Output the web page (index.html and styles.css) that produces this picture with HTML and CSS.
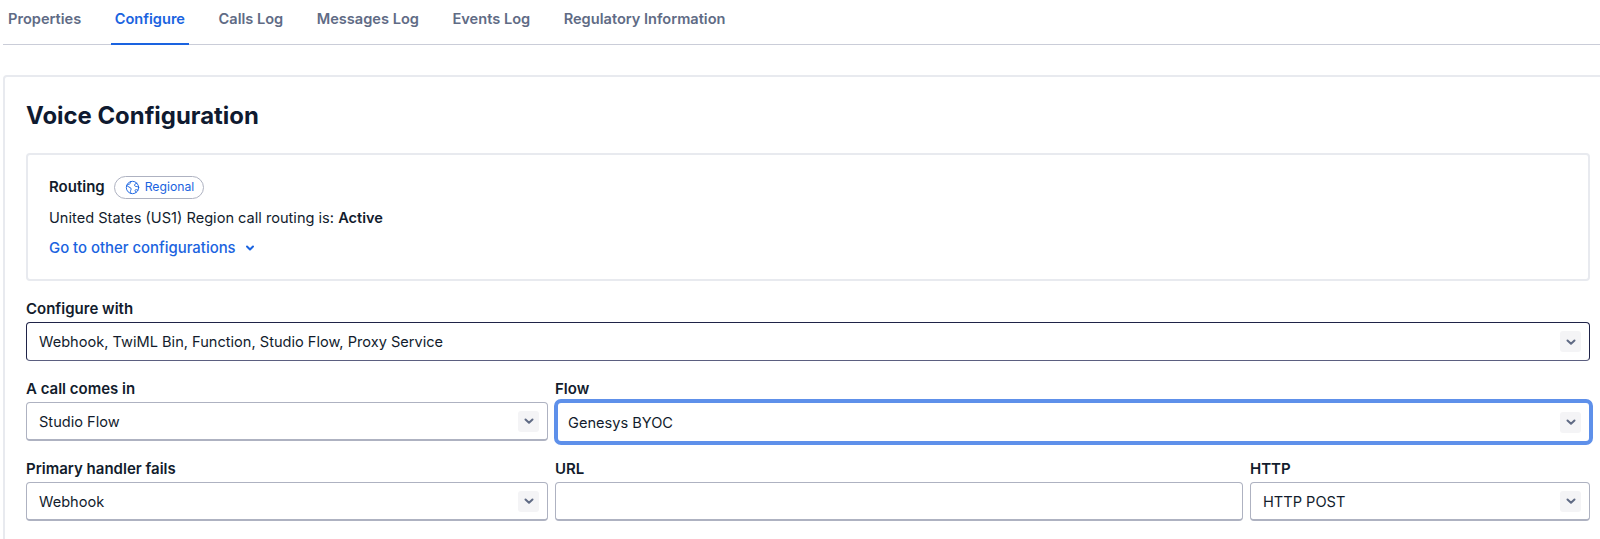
FILE: index.html
```html
<!DOCTYPE html>
<html lang="en">
<head>
<meta charset="utf-8">
<title>Voice Configuration</title>
<link rel="stylesheet" href="styles.css">
</head>
<body>
<nav class="tabs">
  <a class="tab">Properties</a>
  <a class="tab active">Configure</a>
  <a class="tab">Calls Log</a>
  <a class="tab">Messages Log</a>
  <a class="tab">Events Log</a>
  <a class="tab">Regulatory Information</a>
</nav>
<main class="card">
  <h1 class="title">Voice Configuration</h1>
  <section class="routing">
    <div class="routing-head">
      <strong class="routing-label">Routing</strong>
      <span class="badge">
        <svg class="globe" viewBox="0 0 16 16" width="15" height="15" fill="none" stroke="currentColor" stroke-width="1" stroke-linecap="round" stroke-linejoin="round"><circle cx="8" cy="8" r="6.6"/><path d="M6 1.8C6.2 3.4 5.4 4.4 4 4.6 3 4.8 2.2 5.2 1.9 6 3 7.4 5.4 7.4 6.4 8.8 7 10 5.8 11 5.8 12.2 5.8 13.2 6.2 14 6.6 14.4"/><path d="M12.6 3.4C11 3.8 9.8 4.8 10.2 6 10.6 7 12.8 6.8 14.4 7.4"/><path d="M11.8 13.2C11 12.2 10.4 11.4 10.9 10.6 11.4 10 12.6 10.2 13.8 10.8"/></svg>
        Regional
      </span>
    </div>
    <p class="routing-status">United States (US1) Region call routing is: <strong>Active</strong></p>
    <a class="routing-link">Go to other configurations
      <svg class="link-chevron" viewBox="0 0 10 10" width="10" height="10" fill="none" stroke="currentColor" stroke-width="2" stroke-linecap="round" stroke-linejoin="round"><path d="M2 3.5 5 6.5 8 3.5"/></svg>
    </a>
  </section>

  <div class="field">
    <label class="label">Configure with</label>
    <div class="select dark"><span>Webhook, TwiML Bin, Function, Studio Flow, Proxy Service</span><i class="chev"><svg viewBox="0 0 10 10" width="10" height="10" fill="none" stroke="currentColor" stroke-width="2" stroke-linecap="round" stroke-linejoin="round"><path d="M1.5 3.5 5 6.8 8.5 3.5"/></svg></i></div>
  </div>

  <div class="row">
    <div class="field col-left">
      <label class="label">A call comes in</label>
      <div class="select"><span>Studio Flow</span><i class="chev"><svg viewBox="0 0 10 10" width="10" height="10" fill="none" stroke="currentColor" stroke-width="2" stroke-linecap="round" stroke-linejoin="round"><path d="M1.5 3.5 5 6.8 8.5 3.5"/></svg></i></div>
    </div>
    <div class="field col-grow">
      <label class="label">Flow</label>
      <div class="select focus"><span>Genesys BYOC</span><i class="chev"><svg viewBox="0 0 10 10" width="10" height="10" fill="none" stroke="currentColor" stroke-width="2" stroke-linecap="round" stroke-linejoin="round"><path d="M1.5 3.5 5 6.8 8.5 3.5"/></svg></i></div>
    </div>
  </div>

  <div class="row">
    <div class="field col-left">
      <label class="label">Primary handler fails</label>
      <div class="select"><span>Webhook</span><i class="chev"><svg viewBox="0 0 10 10" width="10" height="10" fill="none" stroke="currentColor" stroke-width="2" stroke-linecap="round" stroke-linejoin="round"><path d="M1.5 3.5 5 6.8 8.5 3.5"/></svg></i></div>
    </div>
    <div class="field col-grow">
      <label class="label">URL</label>
      <div class="select"></div>
    </div>
    <div class="field col-http">
      <label class="label">HTTP</label>
      <div class="select"><span>HTTP POST</span><i class="chev"><svg viewBox="0 0 10 10" width="10" height="10" fill="none" stroke="currentColor" stroke-width="2" stroke-linecap="round" stroke-linejoin="round"><path d="M1.5 3.5 5 6.8 8.5 3.5"/></svg></i></div>
    </div>
  </div>
</main>
</body>
</html>
```

FILE: styles.css
```css
* { box-sizing: border-box; }
html, body { height: 539px; overflow: hidden; }
body {
  margin: 0;
  background: #fff;
  color: #121c2d;
  font-family: Inter, "Liberation Sans", sans-serif;
  font-size: 14.6px;
  line-height: 20px;
}
.tabs {
  display: flex;
  gap: 33.5px;
  height: 45px;
  margin-left: 3px;
  padding-left: 5px;
  border-bottom: 1px solid #cacdd8;
}
.tab {
  display: block;
  height: 45px;
  margin-bottom: -1px;
  padding-top: 9px;
  color: #606b85;
  font-size: 14.6px;
  font-weight: 600;
}
.tab.active {
  margin: 0 -4px;
  padding-left: 4px;
  padding-right: 4px;
  color: #1a63e0;
  border-bottom: 2px solid #1a63e0;
}
.card {
  width: 1620px;
  margin: 30px 0 0 3px;
  padding: 0 30px 0 21px;
  border: 2px solid #e8eaef;
  border-radius: 4px;
  height: 480px;
}
.title {
  margin: 0;
  padding-top: 23px;
  height: 76px;
  font-size: 23.9px;
  line-height: 32px;
  font-weight: 700;
  color: #0f1a30;
}
.routing {
  width: 1564px;
  height: 128px;
  padding: 20px 21px 0;
  border: 2px solid #e8eaef;
  border-radius: 4px;
}
.routing-head { display: flex; align-items: center; gap: 9px; height: 24px; }
.routing-label { font-size: 15px; font-weight: 600; }
.badge {
  display: inline-flex;
  align-items: center;
  gap: 5px;
  height: 23px;
  padding: 0 9px 0 10px;
  border: 1px solid #aeb2c1;
  border-radius: 12px;
  color: #1a63e0;
  font-size: 12.2px;
}
.globe { display: block; }
.routing-status { margin: 9px 0 0; }
.routing-status strong { font-weight: 600; }
.routing-link {
  display: flex;
  align-items: center;
  gap: 9px;
  margin-top: 10px;
  color: #1a63e0;
  font-size: 14.9px;
  font-weight: 500;
}
.field { display: flex; flex-direction: column; width: 1564px; }
.label {
  display: block;
  height: 20px;
  margin-top: 17px;
  margin-bottom: 4px;
  font-size: 15px;
  font-weight: 600;
}
.routing + .field .label { margin-top: 18px; margin-bottom: 3px; }
.row { display: flex; gap: 7px; width: 1564px; }
.row .label { margin-top: 18px; margin-bottom: 3px; }
.col-left { width: 522px; }
.col-grow { flex: 1; width: auto; }
.col-http { width: 340px; }
.select {
  display: flex;
  align-items: center;
  justify-content: space-between;
  height: 39px;
  padding: 0 8px 0 12px;
  border: 1px solid #aeb2c1;
  border-bottom-width: 2px;
  border-radius: 4px;
  background: #fff;
}
.select > span { display: block; padding-top: 1px; }
.select.dark { border-color: #1f2348; border-bottom-color: #5b5f80; border-bottom-width: 1px; }
.select.focus {
  height: 46px;
  margin: -3px -3px -4px -1.5px;
  padding: 0 8px 0 10.5px;
  border: 4px solid #5e90ea;
  border-radius: 7px;
}
.chev {
  display: flex;
  align-items: center;
  justify-content: center;
  width: 21px;
  height: 21px;
  border-radius: 3px;
  background: #f4f4f6;
  color: #606b85;
}
```
